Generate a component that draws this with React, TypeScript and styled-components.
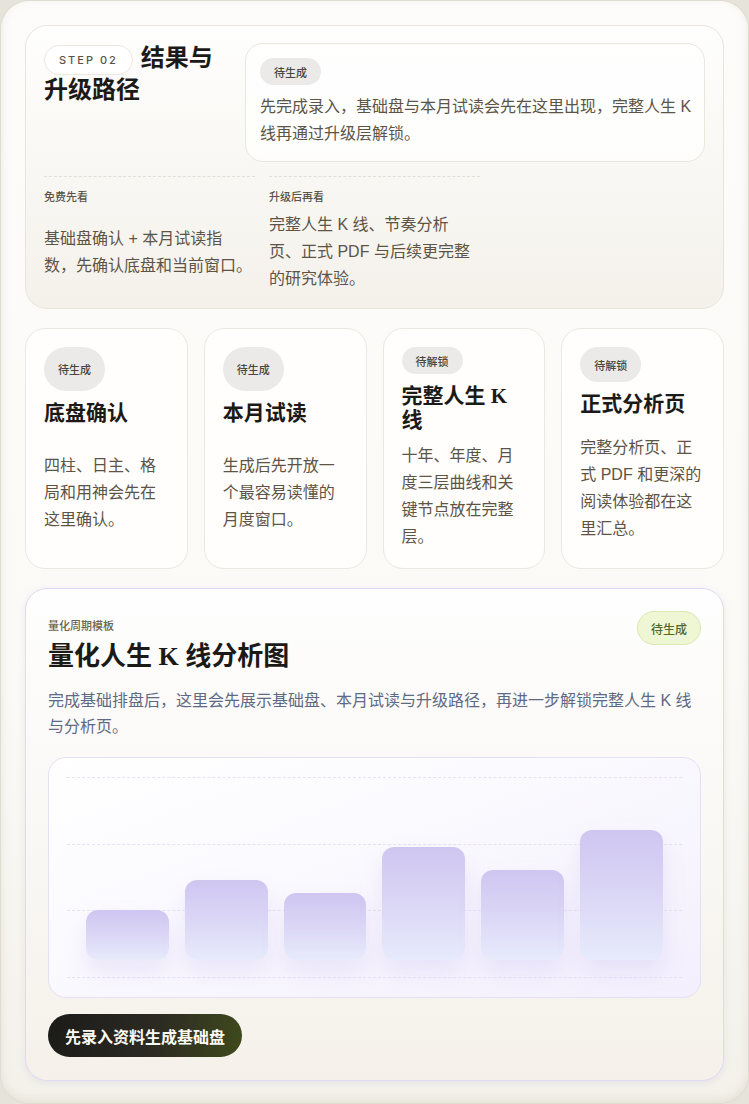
import React from "react";
import styled, { createGlobalStyle } from "styled-components";

const Global = createGlobalStyle`
  html, body { margin: 0; padding: 0; background: #e6e3da; }
  body {
    font-family: "Liberation Sans", "Noto Sans CJK SC", "Noto Sans", sans-serif;
    -webkit-font-smoothing: antialiased;
  }
  * { box-sizing: border-box; }
`;

const Shell = styled.div`
  margin: 1px;
  min-height: 1102px;
  border-radius: 28px;
  background: linear-gradient(180deg, #fdfcfa 0%, #fbfaf7 60%, #f3f1ea 100%);
  box-shadow: inset 0 -3px 8px rgba(200, 194, 178, 0.35), 0 0 0 1px rgba(220, 215, 204, 0.6);
  padding: 24px 24px 22px;
  display: flex;
  flex-direction: column;
  gap: 19px;
`;

const Intro = styled.section`
  border: 1px solid #e9e5dd;
  border-radius: 22px;
  background: linear-gradient(180deg, #fefefd 0%, #f9f7f3 55%, #f4f1eb 100%);
  padding: 17px 18px 16px;
  display: flex;
  flex-direction: column;
  gap: 14px;
`;

const IntroTop = styled.div`
  display: grid;
  grid-template-columns: 187px 1fr;
  gap: 14px;
  align-items: start;
`;

const Heading = styled.h2`
  margin: 0;
  font-family: "Liberation Serif", "Noto Sans CJK SC", serif;
  font-weight: 700;
  font-size: 24px;
  line-height: 31px;
  color: #1c1a17;
`;

const StepPill = styled.span`
  display: inline-flex;
  align-items: center;
  height: 30px;
  padding: 0 14px;
  margin-right: 8px;
  border-radius: 999px;
  border: 1px solid #ebe7df;
  background: #ffffff;
  font-family: "Inter", "Liberation Sans", sans-serif;
  font-size: 11px;
  font-weight: 500;
  letter-spacing: 2px;
  color: #5a5347;
  vertical-align: middle;
`;

const NoticeCard = styled.div`
  border: 1px solid #ebe7df;
  border-radius: 18px;
  background: rgba(255, 255, 255, 0.75);
  padding: 14px 12px 14px 14px;
  display: flex;
  flex-direction: column;
  align-items: flex-start;
  gap: 8px;
`;

const Badge = styled.span<{ $tone?: "gray" | "green" }>`
  display: inline-flex;
  align-items: center;
  justify-content: center;
  min-height: 27px;
  padding: 0 13px;
  border-radius: 999px;
  font-family: "Noto Sans CJK SC", sans-serif;
  font-size: 11px;
  font-weight: 500;
  color: ${(p) => (p.$tone === "green" ? "#56662a" : "#4a4640")};
  background: ${(p) => (p.$tone === "green" ? "#eef6d4" : "#ebeae8")};
  border: 1px solid ${(p) => (p.$tone === "green" ? "#dbeab0" : "transparent")};
`;

const Para = styled.p<{ $color?: string }>`
  margin: 0;
  font-size: 16px;
  line-height: 27px;
  color: ${(p) => p.$color || "#5d5446"};
`;

const TierGrid = styled.div`
  display: grid;
  grid-template-columns: repeat(3, 1fr);
  gap: 14px;
`;

const Tier = styled.div`
  border-top: 1px dashed #e2ded5;
  padding: 12px 3px 0 0;
  display: flex;
  flex-direction: column;
  gap: 8px;
`;

const TierLabel = styled.div`
  font-family: "Noto Sans CJK SC", sans-serif;
  font-size: 11px;
  line-height: 14px;
  font-weight: 500;
  color: #5b5447;
`;

const TierBody = styled.div`
  flex: 1;
  display: flex;
  align-items: center;
`;

const CardRow = styled.div`
  display: grid;
  grid-template-columns: repeat(4, 1fr);
  gap: 16px;
`;

const StageCard = styled.div`
  border: 1px solid #ebe8e2;
  border-radius: 20px;
  background: #fffefd;
  padding: 18px 18px 18px;
  display: grid;
  row-gap: 10px;
  justify-items: start;
`;

const CardTitle = styled.h3`
  margin: 0;
  font-family: "Liberation Serif", "Noto Sans CJK SC", serif;
  font-weight: 700;
  font-size: 21px;
  line-height: 24px;
  color: #1c1a17;
`;

const Chart = styled.section`
  border: 1.5px solid #dedaf3;
  border-radius: 22px;
  background: linear-gradient(180deg, #fefefe 0%, #faf8f5 50%, #f5f1ea 100%);
  box-shadow: 0 2px 6px rgba(190, 185, 220, 0.25);
  padding: 22px 22px 23px;
  display: flex;
  flex-direction: column;
`;

const ChartHead = styled.div`
  display: flex;
  justify-content: space-between;
  align-items: flex-start;
`;

const HeadText = styled.div`
  display: flex;
  flex-direction: column;
  padding-top: 7px;
  gap: 10px;
`;

const Eyebrow = styled.div`
  font-family: "Noto Sans CJK SC", sans-serif;
  font-size: 11px;
  line-height: 14px;
  font-weight: 500;
  color: #6c6547;
`;

const BigTitle = styled.h2`
  margin: 0;
  font-family: "Liberation Serif", "Noto Sans CJK SC", serif;
  font-weight: 700;
  font-size: 26px;
  line-height: 30px;
  color: #1c1a17;
`;

const GreenBadge = styled(Badge)`
  min-height: 34px;
  padding: 0 13px;
  font-size: 12px;
`;

const Desc = styled(Para)`
  margin-top: 16px;
  line-height: 26px;
`;

const Plot = styled.div`
  margin-top: 17px;
  height: 241px;
  border: 1px solid #e4e0f6;
  border-radius: 18px;
  background: linear-gradient(160deg, #ffffff 0%, #faf9fe 45%, #f3effd 100%);
  padding: 19px 18px 20px;
  position: relative;
`;

const GridLayer = styled.div`
  position: absolute;
  inset: 19px 18px 19px;
  display: flex;
  flex-direction: column;
  justify-content: space-between;
  pointer-events: none;
`;

const GridLine = styled.div`
  border-top: 1px dashed #e6e2f4;
`;

const Bars = styled.div`
  position: relative;
  height: 100%;
  display: flex;
  align-items: flex-end;
  gap: 16px;
  padding: 0 19px 17px;
`;

const Bar = styled.div`
  flex: 1;
  border-radius: 12px;
  background: linear-gradient(180deg, #cfc6f1 0%, #dcd8f6 55%, #e7ebfc 100%);
  box-shadow: 0 12px 22px rgba(170, 150, 225, 0.18);
`;

const CTA = styled.button`
  margin-top: 16px;
  align-self: flex-start;
  height: 43px;
  padding: 0 17px;
  border: none;
  border-radius: 999px;
  background: linear-gradient(100deg, #1b1b19 0%, #2c2a23 55%, #3f4a1c 100%);
  color: #fbfaf4;
  font-family: "Noto Sans CJK SC", sans-serif;
  font-size: 16px;
  font-weight: 700;
  cursor: pointer;
`;

const stages = [
  { badge: "待生成", title: "底盘确认", text: "四柱、日主、格局和用神会先在这里确认。" },
  { badge: "待生成", title: "本月试读", text: "生成后先开放一个最容易读懂的月度窗口。" },
  { badge: "待解锁", title: "完整人生 K 线", text: "十年、年度、月度三层曲线和关键节点放在完整层。" },
  { badge: "待解锁", title: "正式分析页", text: "完整分析页、正式 PDF 和更深的阅读体验都在这里汇总。" },
];

const barHeights = [50, 80, 67, 113, 90, 130];

export default function App() {
  return (
    <>
      <Global />
      <Shell>
        <Intro>
          <IntroTop>
            <Heading>
              <StepPill>STEP 02</StepPill>结果与升级路径
            </Heading>
            <NoticeCard>
              <Badge>待生成</Badge>
              <Para>先完成录入，基础盘与本月试读会先在这里出现，完整人生 K 线再通过升级层解锁。</Para>
            </NoticeCard>
          </IntroTop>
          <TierGrid>
            <Tier>
              <TierLabel>免费先看</TierLabel>
              <TierBody>
                <Para>基础盘确认 + 本月试读指数，先确认底盘和当前窗口。</Para>
              </TierBody>
            </Tier>
            <Tier>
              <TierLabel>升级后再看</TierLabel>
              <TierBody>
                <Para>完整人生 K 线、节奏分析页、正式 PDF 与后续更完整的研究体验。</Para>
              </TierBody>
            </Tier>
          </TierGrid>
        </Intro>

        <CardRow>
          {stages.map((s) => (
            <StageCard key={s.title}>
              <Badge>{s.badge}</Badge>
              <CardTitle>{s.title}</CardTitle>
              <Para>{s.text}</Para>
            </StageCard>
          ))}
        </CardRow>

        <Chart>
          <ChartHead>
            <HeadText>
              <Eyebrow>量化周期模板</Eyebrow>
              <BigTitle>量化人生 K 线分析图</BigTitle>
            </HeadText>
            <GreenBadge $tone="green">待生成</GreenBadge>
          </ChartHead>
          <Desc $color="#5e6a84">
            完成基础排盘后，这里会先展示基础盘、本月试读与升级路径，再进一步解锁完整人生 K 线与分析页。
          </Desc>
          <Plot>
            <GridLayer>
              <GridLine />
              <GridLine />
              <GridLine />
              <GridLine />
            </GridLayer>
            <Bars>
              {barHeights.map((h, i) => (
                <Bar key={i} style={{ height: h }} />
              ))}
            </Bars>
          </Plot>
          <CTA>先录入资料生成基础盘</CTA>
        </Chart>
      </Shell>
    </>
  );
}
